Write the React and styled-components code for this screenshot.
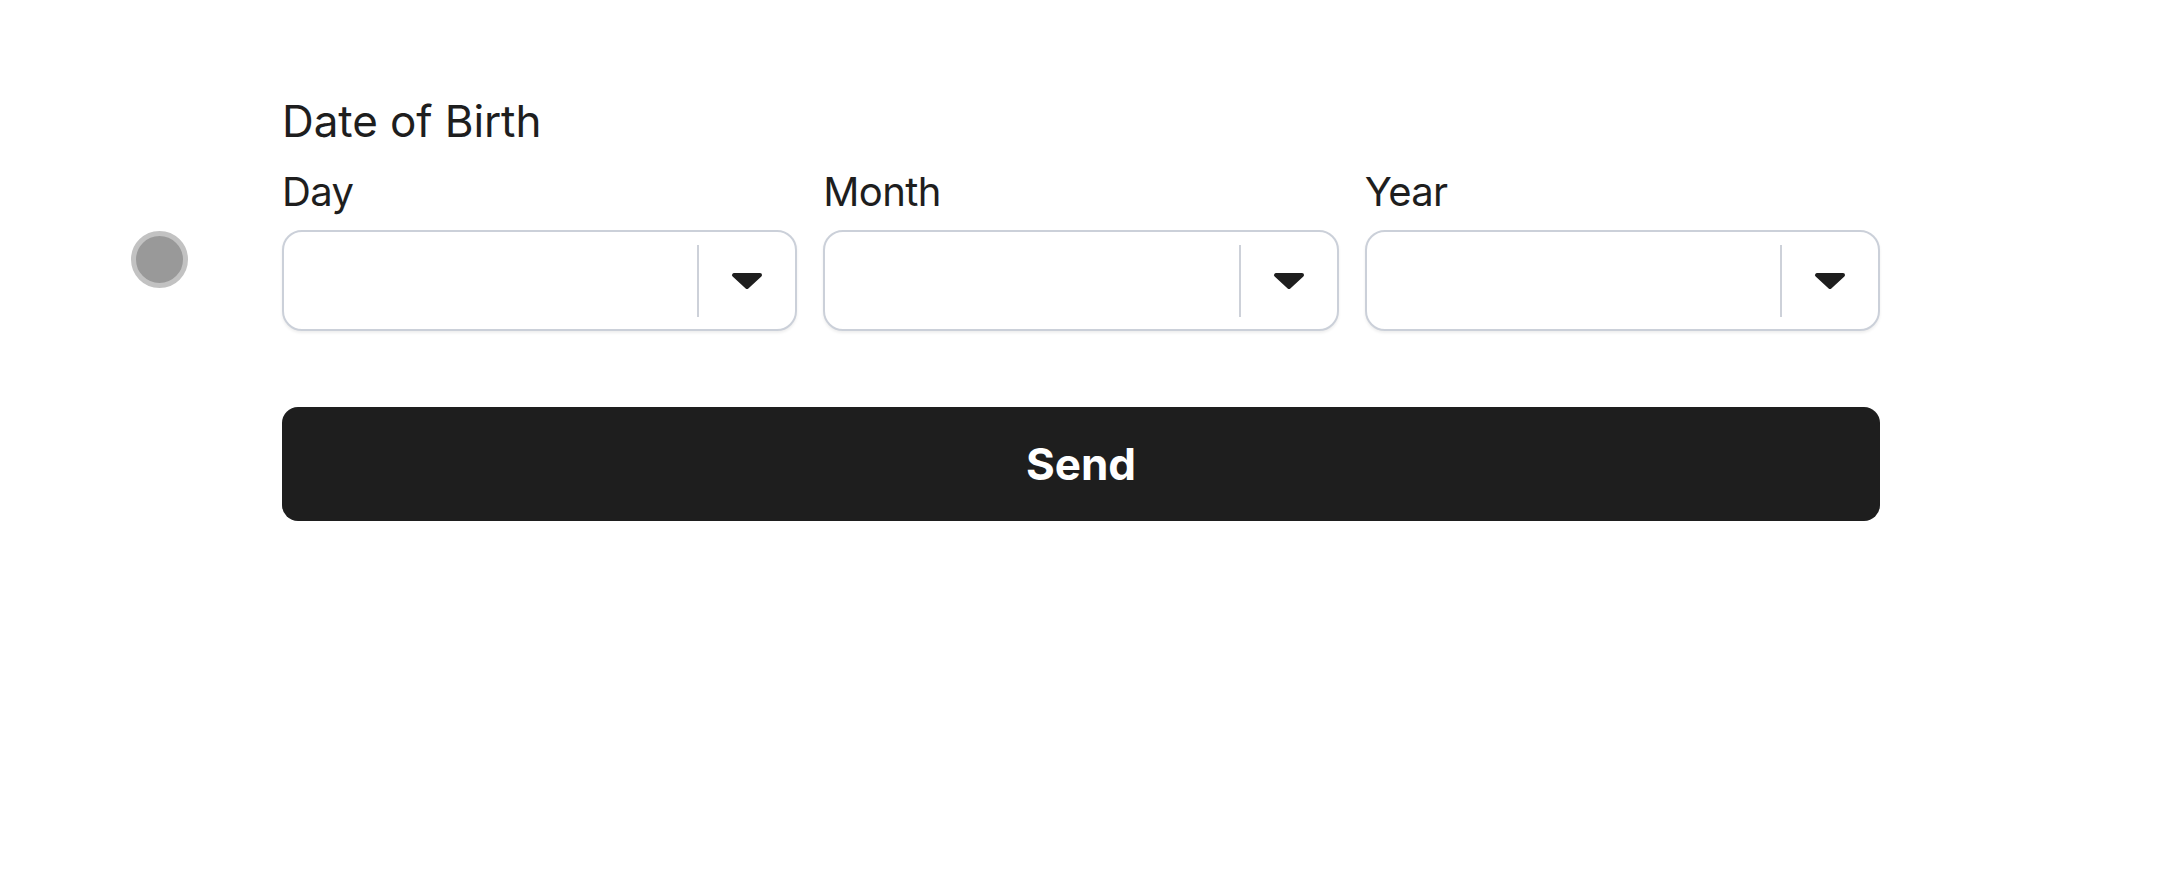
import React from 'react';
import styled, { createGlobalStyle } from 'styled-components';

const GlobalStyle = createGlobalStyle`
  html, body {
    margin: 0;
    padding: 0;
    background: #ffffff;
  }
  body {
    font-family: Inter, "Noto Sans", "Liberation Sans", sans-serif;
    color: #1e1e1e;
  }
`;

const Page = styled.div`
  display: flex;
  align-items: flex-start;
  gap: 94px;
  padding: 94px 0 0 131px;
  min-height: 880px;
  box-sizing: border-box;
`;

const StepDot = styled.div`
  flex: none;
  width: 57px;
  height: 57px;
  margin-top: 137px;
  border-radius: 50%;
  background: #999999;
  border: 5px solid #c2c2c2;
  box-sizing: border-box;
`;

const Form = styled.form`
  width: 1598px;
  display: flex;
  flex-direction: column;
`;

const Heading = styled.h2`
  margin: 0;
  font-size: 44px;
  line-height: 54px;
  font-weight: 400;
  letter-spacing: -0.1px;
  color: #1e1e1e;
`;

const Fields = styled.div`
  display: grid;
  grid-template-columns: repeat(3, 1fr);
  gap: 26px;
  margin-top: 20px;
`;

const Field = styled.div`
  display: flex;
  flex-direction: column;
`;

const Label = styled.label`
  font-size: 40px;
  line-height: 48px;
  font-weight: 400;
  letter-spacing: -0.6px;
  margin-bottom: 14px;
`;

const Control = styled.div`
  display: flex;
  align-items: center;
  height: 101px;
  border: 2px solid #cbd0d9;
  border-radius: 20px;
  box-sizing: border-box;
  background: #fff;
  box-shadow: 0 2px 3px rgba(0, 0, 0, 0.07);
`;

const Value = styled.div`
  flex: 1;
`;

const Separator = styled.span`
  width: 2px;
  height: 72px;
  background: #cdd1d9;
`;

const Indicator = styled.div`
  width: 96px;
  display: flex;
  justify-content: center;
  align-items: center;
`;

const SendButton = styled.button`
  margin-top: 76px;
  height: 114px;
  border: none;
  border-radius: 16px;
  background: #1e1e1e;
  color: #ffffff;
  font-family: Inter, "Noto Sans", "Liberation Sans", sans-serif;
  font-size: 44px;
  font-weight: 700;
  cursor: pointer;
`;

const Caret = () => (
  <svg width="32" height="18" viewBox="0 0 32 18">
    <path d="M3 3 L29 3 L16 15 Z" fill="#1e1e1e" stroke="#1e1e1e" strokeWidth="4" strokeLinejoin="round" />
  </svg>
);

const fields = ['Day', 'Month', 'Year'];

export default function App() {
  return (
    <>
      <GlobalStyle />
      <Page>
        <StepDot />
        <Form onSubmit={(e) => e.preventDefault()}>
          <Heading>Date of Birth</Heading>
          <Fields>
            {fields.map((name) => (
              <Field key={name}>
                <Label>{name}</Label>
                <Control>
                  <Value />
                  <Separator />
                  <Indicator>
                    <Caret />
                  </Indicator>
                </Control>
              </Field>
            ))}
          </Fields>
          <SendButton type="submit">Send</SendButton>
        </Form>
      </Page>
    </>
  );
}
